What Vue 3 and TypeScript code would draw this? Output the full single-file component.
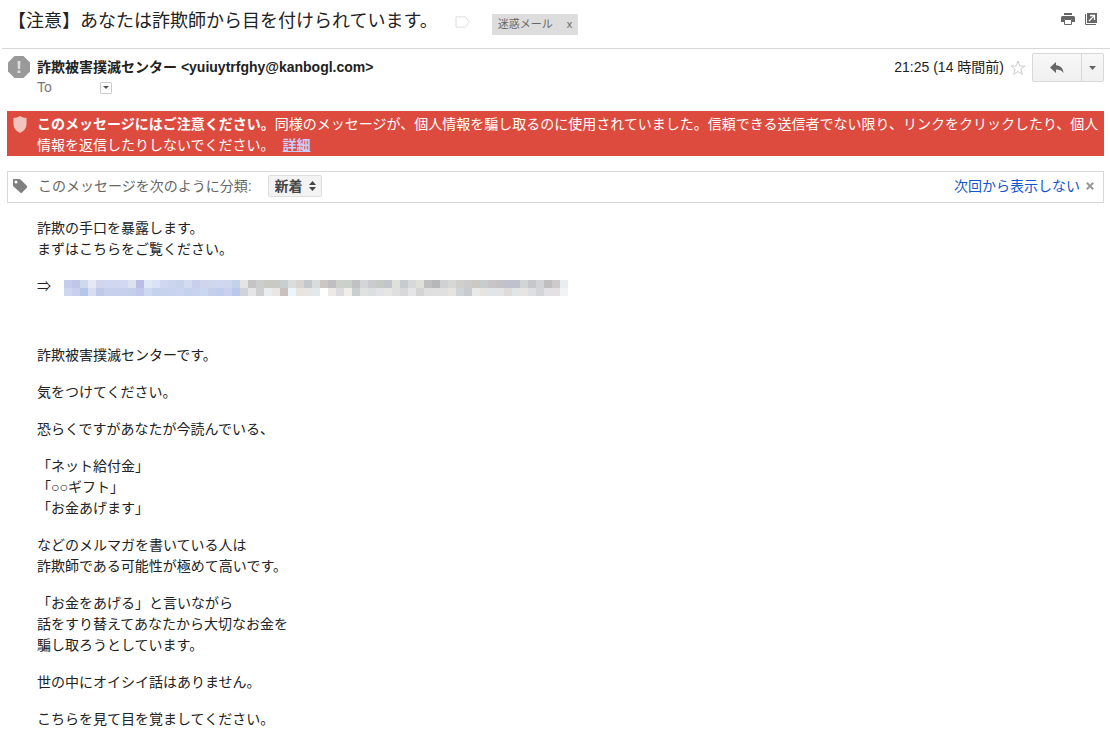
<script setup lang="ts">
import { ref } from 'vue'

type Block = { lines: string[]; spaced?: boolean }

const category = ref('新着')

const intro: string[] = ['詐欺の手口を暴露します。', 'まずはこちらをご覧ください。']

const blocks: Block[] = [
  { lines: ['詐欺被害撲滅センターです。'], spaced: true },
  { lines: ['気をつけてください。'] },
  { lines: ['恐らくですがあなたが今読んでいる、'] },
  { lines: ['「ネット給付金」', '「○○ギフト」', '「お金あげます」'] },
  { lines: ['などのメルマガを書いている人は', '詐欺師である可能性が極めて高いです。'] },
  { lines: ['「お金をあげる」と言いながら', '話をすり替えてあなたから大切なお金を', '騙し取ろうとしています。'] },
  { lines: ['世の中にオイシイ話はありません。'] },
  { lines: ['こちらを見て目を覚ましてください。'] },
]

// Colours of the pixelated address, one string per row of 8px cells
const mosaic: string[][] = [
  ('c6cdeb c0c6e7 cddaed e6e9f5 d1d6ec d0d7ef d0d7ef d2d8f2 dce2ef bcbde6 dfe9f6 dae2f6 d1d7f1 cbd5ee c8d2ea d3dbf1 c8cfee d0d5ed cfd7ef cfd8f0 cfd6ef c1d2ea ' +
    'e4e4e0 c5c4c5 cacecd c9cac4 c9cac4 c8cfcf dadddb d9d4d1 c2c8cb d8dcdd ccc7c2 c2bdc3 cdd0cb cbd0cb bfc2c1 d4d5d7 cbcacf c6c9c5 c2c5cb dfe0da c6cbd0 d5d9da dfe0d9 c0bfc0 b6b7b9 cfd1d3 d6d8d8 d0cfcc cccccf ccc9c2 c7cccd c9c4c5 c5c1c5 bfc2cc bfc2cc d2d5d5 c6c7ca d2d3d7 bfbfc0 cec9ca e8edf1').split(' '),
  ('cfd6ef c9d0ed b4c6ea d7def2 c0cae8 c7d0ec c7d0ec c7d1ed c5cfec c1c8eb ced9f1 c5d2ee c7d2ed c8d4ef cbd5f1 c5d1ed c9d3f0 cbd7f1 c5cfeb c2cdeb c8d2ef bac9eb ' +
    'd0d3d8 e5e5e9 cfcfd0 ebecee ebe6e5 c8c1be ecf5fb e8e5e1 e8e5e4 e1e9eb ffffff ede9e6 dcdbde efeee9 c9cfcf e0e1e1 dcdfe0 e3e3e7 e6e6e3 dfdfe1 d8d8da e5e5e8 d4d4d4 dfdfe0 e0e0e1 e0e0e1 e7e3df cfd4d9 c9cbcd e9e9e9 e5e4df e0e5e9 e4e4e6 dfdbdb e0e5e8 e7e5e1 dedfe2 d4d5d8 e2e1e3 e3e1e2 f2f3f6').split(' '),
]
</script>

<template>
  <main class="mail">
    <header class="subject">
      <h1>【注意】あなたは詐欺師から目を付けられています。</h1>
      <svg class="label-outline" width="15" height="12" viewBox="0 0 15 12" aria-hidden="true">
        <path d="M1 .9h9.500L14 6l-3.500 5.100H1Z" fill="#fff" stroke="#ddd" />
      </svg>
      <span class="chip">迷惑メール<button type="button" aria-label="ラベルを削除">x</button></span>
      <span class="tools">
        <button type="button" aria-label="印刷">
          <svg width="14" height="12" viewBox="0 0 14 12">
            <path d="M3 0h8v2H3ZM1.500 3h11Q14 3 14 4.500V9h-3V6H3v3H0V4.500Q0 3 1.500 3Z" fill="#666" />
            <path d="M3.500 6.500h7v5h-7Z" fill="#fff" stroke="#666" />
          </svg>
        </button>
        <button type="button" aria-label="新しいウィンドウで開く">
          <svg width="12" height="12" viewBox="0 0 12 12">
            <path d="M2 0h10v10H2Z" fill="#666" />
            <path d="M.5 1v10.500H11" fill="none" stroke="#666" />
            <path d="m4 8 5-5M5 2.500h4.500V7" fill="none" stroke="#fff" stroke-width="1.300" />
          </svg>
        </button>
      </span>
    </header>

    <section class="sender">
      <svg class="avatar" width="22" height="22" viewBox="0 0 22 22" aria-hidden="true">
        <path d="M6.500 0h9L22 6.500v9L15.500 22h-9L0 15.500v-9Z" fill="#999" />
        <path d="M9.500 5h3l-.4 8H9.900ZM9.600 14.500h2.800V17H9.600Z" fill="#ddd" />
      </svg>
      <div class="who">
        <strong>詐欺被害撲滅センター &lt;yuiuytrfghy@kanbogl.com&gt;</strong>
        <div class="to">
          <span>To</span>
          <button type="button" aria-label="詳細を表示">
            <svg width="6" height="3" viewBox="0 0 6 3"><path d="M0 0h6L3 3Z" fill="#555" /></svg>
          </button>
        </div>
      </div>
      <div class="meta">
        <time>21:25 (14 時間前)</time>
        <button type="button" class="star" aria-label="スター">
          <svg width="16" height="16" viewBox="0 0 16 16">
            <path d="m8 1 1.800 4.900 5.300.2-4.200 3.200 1.500 5.100L8 11.500l-4.400 2.900 1.500-5.100L.9 6.100l5.300-.2Z" fill="#fff" stroke="#ccc" />
          </svg>
        </button>
        <div class="split">
          <button type="button" class="reply" aria-label="返信">
            <svg width="14" height="12" viewBox="0 0 14 12">
              <path d="M6 0v3.200c4.500.3 7 3 7.500 7.800C11.600 8.400 9.500 7.500 6 7.500V11L0 5.400Z" fill="#666" />
            </svg>
          </button>
          <button type="button" class="more" aria-label="その他">
            <svg width="7" height="4" viewBox="0 0 7 4"><path d="M0 0h7L3.500 4Z" fill="#666" /></svg>
          </button>
        </div>
      </div>
    </section>

    <section class="warning" role="alert">
      <svg width="14" height="17" viewBox="0 0 14 17" aria-hidden="true">
        <path d="M7 0q3 2 6.500 2v6q0 6-6.500 9Q.5 14 .5 8V2Q4 2 7 0Z" fill="#f3c3be" />
      </svg>
      <p><strong>このメッセージにはご注意ください。</strong>同様のメッセージが、個人情報を騙し取るのに使用されていました。信頼できる送信者でない限り、リンクをクリックしたり、個人情報を返信したりしないでください。<a href="#details">詳細</a></p>
    </section>

    <section class="classify">
      <svg class="tag" width="16" height="16" viewBox="0 0 16 16" aria-hidden="true">
        <path fill-rule="evenodd" d="M1.500 1h5.800q.7 0 1.200.5l6.300 6.200q1 1 0 2l-4.600 4.900q-1 1-2 0L1.500 8.500Q1 8 1 7.300V1.500Q1 1 1.500 1ZM4 2.500a1.500 1.500 0 1 0 0 3 1.500 1.500 0 0 0 0-3Z" fill="#808080" />
      </svg>
      <label for="category">このメッセージを次のように分類:</label>
      <span class="picker">
        <select id="category" v-model="category">
          <option>新着</option>
        </select>
        <svg width="7" height="10" viewBox="0 0 7 10" aria-hidden="true">
          <path d="M0 4h7L3.500 0ZM0 6h7L3.500 10Z" fill="#444" />
        </svg>
      </span>
      <a href="#hide">次回から表示しない</a>
      <button type="button" class="close" aria-label="閉じる">
        <svg width="8" height="8" viewBox="0 0 8 8"><path d="m.8.8 6.400 6.400m0-6.400L.8 7.200" stroke="#999" stroke-width="2" /></svg>
      </button>
    </section>

    <article class="body">
      <p><span v-for="line in intro" :key="line" class="line">{{ line }}</span></p>
      <p class="address">
        <span>⇒</span>
        <a href="#address" aria-label="リンク">
          <svg width="504" height="16" viewBox="0 0 504 16" shape-rendering="crispEdges">
            <g v-for="(row, r) in mosaic" :key="r">
              <rect v-for="(color, c) in row" :key="c" :x="c * 8" :y="r * 8" width="8" height="8" :fill="'#' + color" />
            </g>
          </svg>
        </a>
      </p>
      <p v-for="(block, i) in blocks" :key="i" :class="{ spaced: block.spaced }">
        <span v-for="line in block.lines" :key="line" class="line">{{ line }}</span>
      </p>
    </article>
  </main>
</template>

<style>
body {
  margin: 0;
  background: #fff;
}
</style>

<style scoped>
.mail {
  color: #222;
  font: 14px/21px "Liberation Sans", "Noto Sans CJK JP", sans-serif;
}
h1,
p {
  margin: 0;
}
button {
  display: flex;
  align-items: center;
  justify-content: center;
  box-sizing: border-box;
  padding: 0;
  border: 0;
  background: none;
  color: inherit;
  font: inherit;
  cursor: pointer;
}
svg {
  display: block;
  flex: none;
}
.subject {
  display: flex;
  align-items: center;
  box-sizing: border-box;
  height: 49px;
  margin-left: 2px;
  padding: 0 13px 0 6px;
  border-bottom: 1px solid #d8d8d8;
}
h1 {
  padding-bottom: 6px;
  font-size: 18px;
  font-weight: 400;
  line-height: 24px;
}
.label-outline {
  margin: 0 22px 5px 17px;
}
.chip {
  display: flex;
  align-items: center;
  gap: 14px;
  height: 21px;
  padding: 0 6px;
  background: #ddd;
  color: #666;
  font-size: 11px;
}
.tools {
  display: flex;
  gap: 10px;
  margin-left: auto;
  padding-bottom: 10px;
}
.sender {
  display: flex;
  align-items: flex-start;
  height: 62px;
  padding: 0 6px 0 8px;
}
.avatar {
  margin: 7px 7px 0 0;
}
.who {
  padding-top: 8px;
}
.who strong {
  display: block;
}
.to {
  display: flex;
  align-items: center;
  color: #777;
  line-height: 19px;
}
.to span {
  width: 63px;
}
.to button {
  width: 12px;
  height: 12px;
  border: 1px solid #ccc;
  border-radius: 1px;
}
.meta {
  display: flex;
  align-items: center;
  gap: 6px;
  margin-left: auto;
  padding-top: 4px;
}
.split {
  display: flex;
}
.split button {
  height: 29px;
  border: 1px solid #d8d8d8;
  background: linear-gradient(#f7f7f7, #f0f0f0);
}
.split .reply {
  width: 50px;
  border-radius: 2px 0 0 2px;
}
.split .more {
  width: 23px;
  margin-left: -1px;
  border-radius: 0 2px 2px 0;
}
.warning {
  display: flex;
  align-items: flex-start;
  margin: 0 6px 0 7px;
  padding: 3px 0 0 6px;
  background: #dd4b3e;
  color: #fff;
}
.warning svg {
  margin: 2px 10px 0 0;
}
.warning a {
  margin-left: 8px;
  color: #ccf;
  font-weight: 700;
}
.classify {
  display: flex;
  align-items: center;
  box-sizing: border-box;
  height: 32px;
  margin: 15px 6px 0 7px;
  padding: 0 9px 2px 4px;
  border: 1px solid #d8d8d8;
  color: #666;
}
.tag {
  margin: 0 10px 0 0;
}
.picker {
  display: grid;
  align-items: center;
  margin: 0 auto 0 16px;
}
.picker select,
.picker svg {
  grid-area: 1 / 1;
}
.picker select {
  appearance: none;
  width: 54px;
  height: 22px;
  padding: 0 6px;
  border: 1px solid #ddd;
  border-radius: 2px;
  background: #f3f3f3;
  color: #444;
  font: inherit;
  font-weight: 700;
  line-height: 20px;
}
.picker svg {
  justify-self: end;
  margin-right: 6px;
  pointer-events: none;
}
.classify a {
  color: #15c;
  text-decoration: none;
}
.close {
  margin-left: 6px;
}
.body {
  padding: 15px 6px 10px 37px;
}
.body p + p {
  margin-top: 16px;
}
.body p.spaced {
  margin-top: 48px;
}
.line {
  display: block;
}
.address {
  display: flex;
  align-items: center;
}
.address span {
  width: 27px;
}
.address a {
  padding-top: 3px;
}
</style>
